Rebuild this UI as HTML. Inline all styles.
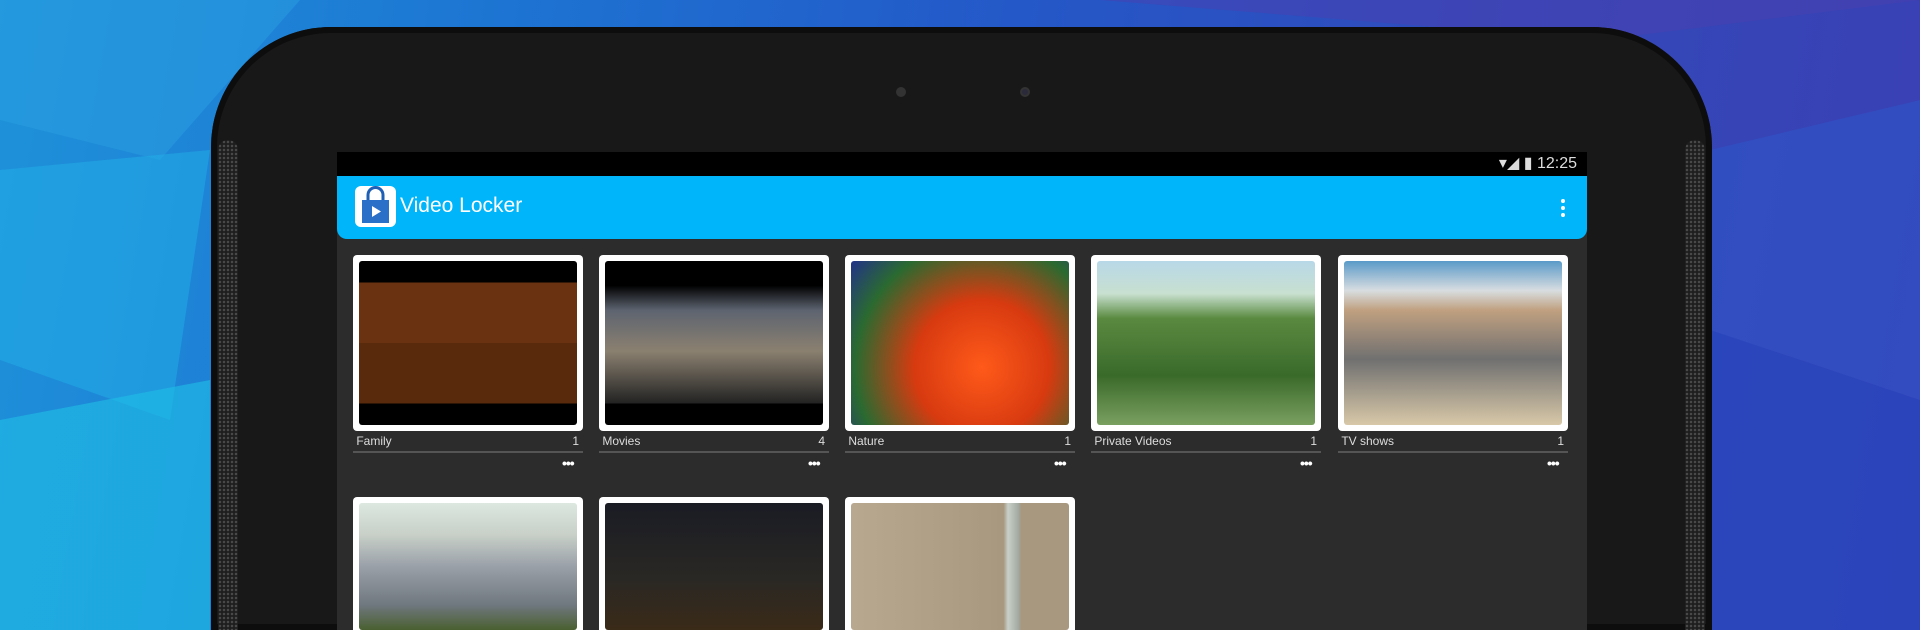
<!DOCTYPE html>
<html><head><meta charset="utf-8"><style>
*{margin:0;padding:0;box-sizing:border-box}
html,body{width:1920px;height:630px;overflow:hidden}
body{font-family:"Liberation Sans",sans-serif}
#w{position:relative;width:1920px;height:630px;overflow:hidden;
background:linear-gradient(100deg,#1e92da 0%,#1d74d2 25%,#2458c8 50%,#3249ba 75%,#3b3fb2 100%)}
.bg{position:absolute;left:0;top:0}
.tab{position:absolute;left:211px;top:27px;width:1501px;height:603px;background:#181818;border-radius:120px 120px 0 0;box-shadow:inset 0 0 0 6px #0d0d0d}
.grille{position:absolute;top:140px;width:20px;height:490px;border-radius:10px 10px 0 0;background:repeating-radial-gradient(circle at 2px 2px,#4a4a4a 0 1px,#1e1e1e 1.5px 4px);background-size:4px 4px}
.cam{position:absolute;width:10px;height:10px;border-radius:50%;background:#333}
.screen{position:absolute;left:337px;top:152px;width:1250px;height:478px;background:#2c2c2c}
.status{height:24px;background:#000;color:#ddd;font-size:16px;text-align:right;padding-right:10px;line-height:24px}
.bar{height:63px;background:#00b5fa;border-radius:0 0 10px 10px;position:relative}
.bar .t{position:absolute;left:63px;top:18px;color:#fff;font-size:21px}
.icon{position:absolute;left:18px;top:10px;width:41px;height:41px;background:#fff;border-radius:6px}
.menu{position:absolute;right:22px;top:23px;width:4px}
.menu i{display:block;width:4px;height:4px;background:#fff;border-radius:50%;margin-bottom:3px}
.card{position:absolute;width:230px;height:176px;background:#fff;border-radius:4px;padding:6px}
.card div{width:100%;height:100%;border-radius:3px}
.card.b{height:133px;padding-bottom:0;border-radius:4px 4px 0 0}
.lab{position:absolute;width:230px;font-size:12px;color:#ddd;border-bottom:2px solid #555;height:19px}
.lab span{float:right;margin-right:4px}
.dots{position:absolute;color:#fff;font-size:14px;font-weight:bold;letter-spacing:-1px}
</style></head><body><div id="w">
<svg class="bg" width="1920" height="630">
<polygon points="0,0 300,0 160,160 0,120" fill="#2aa0e2" opacity=".5"/>
<polygon points="0,170 210,150 170,420 0,360" fill="#22b0e8" opacity=".5"/>
<polygon points="0,420 210,380 210,630 0,630" fill="#1fc0e6" opacity=".6"/>
<polygon points="1100,0 1920,0 1600,40" fill="#4a3fb0" opacity=".5"/>
<polygon points="1710,150 1920,100 1920,400 1710,330" fill="#2f55c8" opacity=".6"/>
<polygon points="1710,330 1920,400 1920,630 1710,630" fill="#2348c0" opacity=".6"/>
</svg>
<div class="tab"></div>
<div class="grille" style="left:218px"></div>
<div class="grille" style="left:1685px"></div>
<div class="cam" style="left:896px;top:87px"></div>
<div class="cam" style="left:1020px;top:87px;background:#2a2a3a;border:2px solid #333"></div>
<div class="screen">
<div class="status">▾◢ ▮ 12:25</div>
<div class="bar"><div class="icon"><svg width="41" height="41"><path d="M13 14 V9 a7 7 0 0 1 15 0 V14" stroke="#1f5fb5" stroke-width="3" fill="none"/><rect x="7" y="14" width="27" height="23" fill="#2a6fc8"/><polygon points="17,20 26,25.5 17,31" fill="#fff"/></svg></div><div class="t">Video Locker</div><div class="menu"><i></i><i></i><i></i></div></div>
</div>
<div class="card" style="left:353px;top:255px"><div style="background:linear-gradient(#000 0 13%,#6a3210 13% 50%,#5a2a0d 50% 87%,#000 87%)"></div></div>
<div class="card" style="left:599px;top:255px"><div style="background:linear-gradient(#000 0 15%,#5d6470 30%,#8b8070 55%,#222 87%,#000 87%)"></div></div>
<div class="card" style="left:845px;top:255px"><div style="background:radial-gradient(circle at 60% 65%,#ff5a1a,#d83a10 40%,#2a6a30 75%,#223388)"></div></div>
<div class="card" style="left:1091px;top:255px"><div style="background:linear-gradient(#b8d8e8 0,#c8e0d0 20%,#5a8a40 35%,#3a6a2a 70%,#7aa060)"></div></div>
<div class="card" style="left:1338px;top:255px"><div style="background:linear-gradient(#5a9ac8 0,#d8dde0 18%,#c0a080 30%,#707070 60%,#d8c8a8 100%)"></div></div>
<div class="lab" style="left:353px;top:434px">&nbsp;Family<span>1</span></div>
<div class="lab" style="left:599px;top:434px">&nbsp;Movies<span>4</span></div>
<div class="lab" style="left:845px;top:434px">&nbsp;Nature<span>1</span></div>
<div class="lab" style="left:1091px;top:434px">&nbsp;Private Videos<span>1</span></div>
<div class="lab" style="left:1338px;top:434px">&nbsp;TV shows<span>1</span></div>
<div class="dots" style="left:562px;top:455px">•••</div>
<div class="dots" style="left:808px;top:455px">•••</div>
<div class="dots" style="left:1054px;top:455px">•••</div>
<div class="dots" style="left:1300px;top:455px">•••</div>
<div class="dots" style="left:1547px;top:455px">•••</div>
<div class="card b" style="left:353px;top:497px"><div style="background:linear-gradient(#dce8e0 0,#c8d0c8 25%,#9aa0a8 50%,#707880 80%,#4a6030)"></div></div>
<div class="card b" style="left:599px;top:497px"><div style="background:linear-gradient(#1a1c24,#2a2824 60%,#3a2a18)"></div></div>
<div class="card b" style="left:845px;top:497px"><div style="background:linear-gradient(90deg,#b8a890 0,#a89880 70%,#c8d0c8 72%,#a0a8a0 77%,#a89880 78%)"></div></div>
</div></body></html>
